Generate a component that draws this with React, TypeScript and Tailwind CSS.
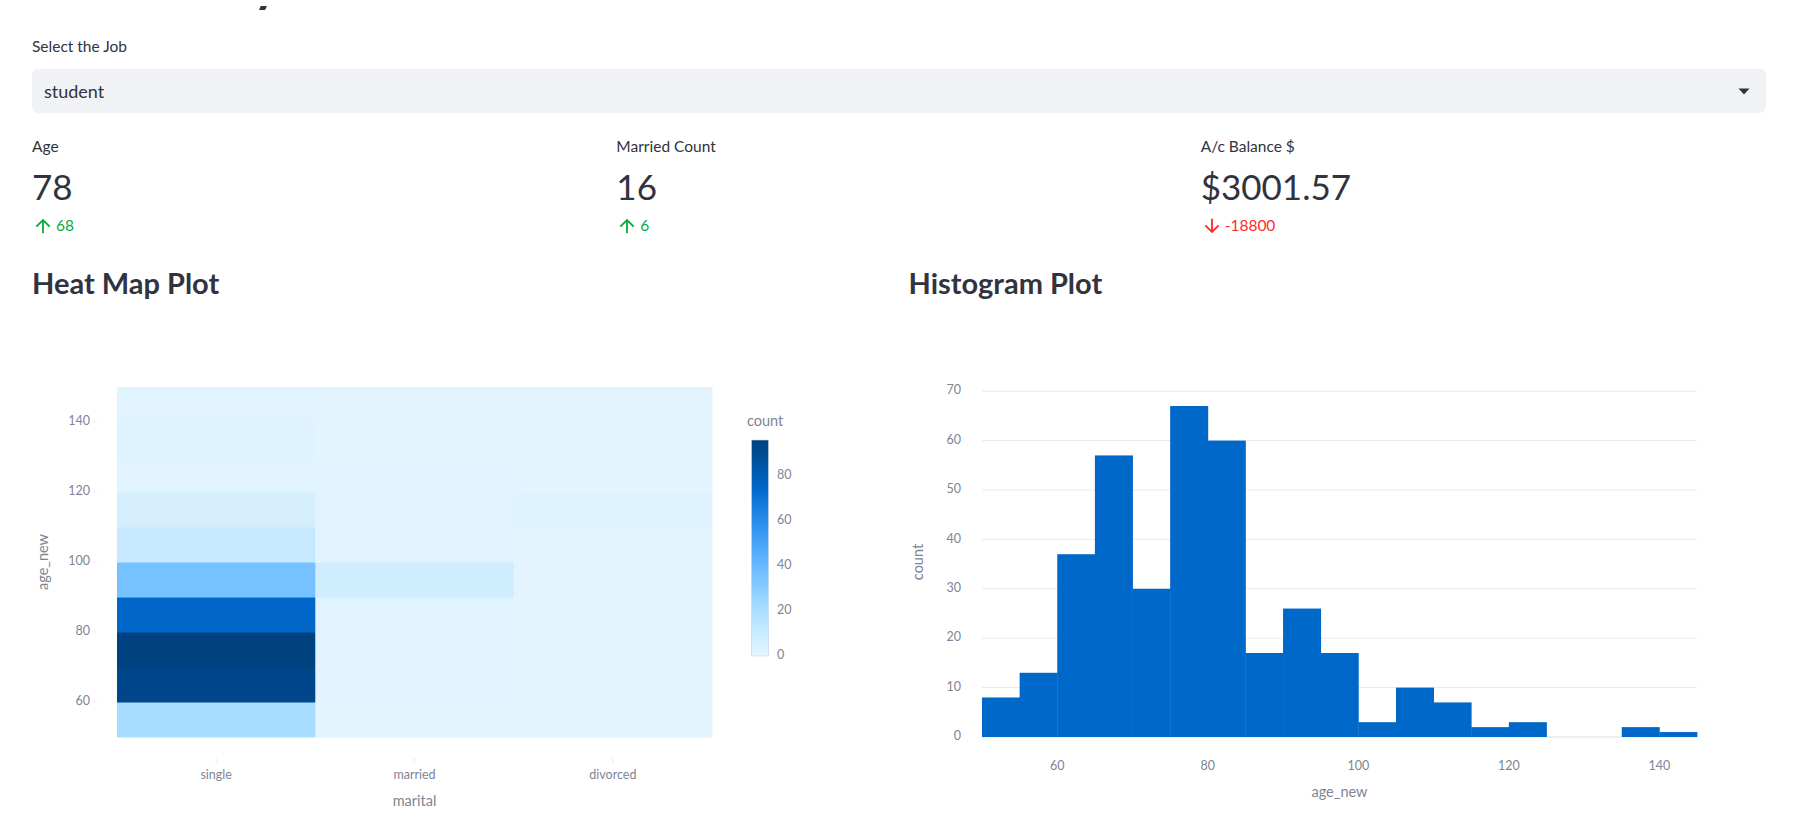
import { ReactNode } from 'react';

// streamlit sequential blues, bottom -> top
const SEQ = ['#e4f5ff', '#c7ebff', '#a6dcff', '#83c9ff', '#60b4ff', '#3d9df3', '#1c83e1', '#0068c9', '#0054a3', '#004280'];

// heat map cells per column, from the 50-60 bin up to 140-150
const HEAT = [
  ['#a6dcff', '#00468a', '#004280', '#0066c8', '#76c1ff', '#c6e9ff', '#d5eefe', '#e0f3ff', '#dff2ff', '#e1f3ff'],
  ['#e3f4ff', '#e2f4ff', '#e2f4ff', '#e0f3ff', '#d0ecff', '#e0f3ff', '#e1f3ff', '#e1f3ff', '#e3f4ff', '#e3f4ff'],
  ['#e3f4ff', '#e3f4ff', '#e3f4ff', '#e3f4ff', '#e3f4ff', '#e3f4ff', '#dff2ff', '#e3f4ff', '#e3f4ff', '#e3f4ff'],
];

const HIST = [8, 13, 37, 57, 30, 67, 60, 17, 26, 17, 3, 10, 7, 2, 3, 0, 0, 2, 1];

const AXIS = '#808495';
const GRID = '#e6eaf1';

function ArrowUp() {
  return (
    <svg width="22" height="22" viewBox="0 0 24 24" fill="#09ab3b">
      <path d="M4 12l1.41 1.41L11 7.83V20h2V7.83l5.58 5.59L20 12l-8-8-8 8z" />
    </svg>
  );
}

function ArrowDown() {
  return (
    <svg width="22" height="22" viewBox="0 0 24 24" fill="#ff2b2b">
      <path d="M20 12l-1.41-1.41L13 16.17V4h-2v12.17l-5.58-5.59L4 12l8 8 8-8z" />
    </svg>
  );
}

function Metric({ label, value, delta, up }: { label: string; value: string; delta: string; up: boolean }) {
  return (
    <div className="flex flex-col">
      <div className="h-[20px] leading-[20px] text-[15.5px] text-[#31333f]">{label}</div>
      <div className="mt-[8px] h-[44px] leading-[44px] text-[35px] text-[#31333f]">{value}</div>
      <div className={`mt-[7px] h-[22px] flex items-center gap-[2px] text-[15.5px] ${up ? 'text-[#09ab3b]' : 'text-[#ff2b2b]'}`}>
        {up ? <ArrowUp /> : <ArrowDown />}
        <span>{delta}</span>
      </div>
    </div>
  );
}

function HeatMap() {
  const left = 85;
  const top = 84;
  const bottom = 434;
  const colW = (680 - 85) / 3;
  const rowH = (bottom - top) / 10;
  const yTicks = [140, 120, 100, 80, 60];
  const cats = ['single', 'married', 'divorced'];
  const cbTop = 137;
  const cbBottom = 353;

  return (
    <svg width="857" height="534" className="block">
      <defs>
        <linearGradient id="cb" x1="0" y1="1" x2="0" y2="0">
          {SEQ.map((c, i) => (
            <stop key={i} offset={i / (SEQ.length - 1)} stopColor={c} />
          ))}
        </linearGradient>
      </defs>

      {HEAT.map((col, ci) =>
        col.map((c, ri) => (
          <rect
            key={`${ci}-${ri}`}
            x={left + ci * colW}
            y={bottom - (ri + 1) * rowH}
            width={colW + 0.5}
            height={rowH + 0.5}
            fill={c}
          />
        ))
      )}

      {yTicks.map((v) => {
        const y = bottom - (v - 50) * 3.5;
        return (
          <g key={v}>
            <line x1={61} x2={65} y1={y} y2={y} stroke={GRID} />
            <text x={58} y={y} textAnchor="end" dominantBaseline="middle" fontSize="12.5" fill={AXIS}>
              {v}
            </text>
          </g>
        );
      })}
      <text
        x={12}
        y={259}
        transform="rotate(-90 12 259)"
        textAnchor="middle"
        dominantBaseline="middle"
        fontSize="14.5"
        fill={AXIS}
      >
        age_new
      </text>

      {cats.map((c, i) => {
        const x = left + colW * (i + 0.5);
        return (
          <g key={c}>
            <line x1={x} x2={x} y1={455} y2={460} stroke={GRID} />
            <text x={x} y={472.5} textAnchor="middle" dominantBaseline="middle" fontSize="12.5" fill={AXIS}>
              {c}
            </text>
          </g>
        );
      })}
      <text x={382.5} y={499.5} textAnchor="middle" dominantBaseline="middle" fontSize="14.5" fill={AXIS}>
        marital
      </text>

      {/* colour bar */}
      <text x={715} y={119} dominantBaseline="middle" fontSize="14.5" fill={AXIS}>
        count
      </text>
      <rect x={719.5} y={cbTop} width={17} height={cbBottom - cbTop} fill="url(#cb)" stroke="#c9d3e3" strokeWidth="0.6" />
      {[0, 20, 40, 60, 80].map((v) => (
        <text key={v} x={745} y={cbBottom - v * 2.25} dominantBaseline="middle" fontSize="12.5" fill={AXIS}>
          {v}
        </text>
      ))}
    </svg>
  );
}

function Histogram() {
  const left = 73;
  const right = 788;
  const base = 434;
  const unit = 4.94;
  const binW = (right - left) / HIST.length;
  const xTicks = [60, 80, 100, 120, 140];

  return (
    <svg width="857" height="534" className="block">
      {[10, 20, 30, 40, 50, 60, 70].map((v) => (
        <line key={v} x1={left} x2={right} y1={base - v * unit} y2={base - v * unit} stroke={GRID} strokeWidth="1" />
      ))}
      <line x1={left} x2={right} y1={base} y2={base} stroke={GRID} strokeWidth="1.5" />

      {HIST.map((v, i) =>
        v > 0 ? (
          <rect key={i} x={left + i * binW} y={base - v * unit} width={binW + 0.4} height={v * unit} fill="#0068c9" />
        ) : null
      )}

      {[0, 10, 20, 30, 40, 50, 60, 70].map((v) => (
        <text key={v} x={52} y={base - v * unit} textAnchor="end" dominantBaseline="middle" fontSize="12.5" fill={AXIS}>
          {v}
        </text>
      ))}
      <text
        x={10}
        y={259}
        transform="rotate(-90 10 259)"
        textAnchor="middle"
        dominantBaseline="middle"
        fontSize="14.5"
        fill={AXIS}
      >
        count
      </text>

      {xTicks.map((v) => (
        <text
          key={v}
          x={left + ((v - 50) / 5) * binW}
          y={464}
          textAnchor="middle"
          dominantBaseline="middle"
          fontSize="12.5"
          fill={AXIS}
        >
          {v}
        </text>
      ))}
      <text x={430.5} y={490.5} textAnchor="middle" dominantBaseline="middle" fontSize="14.5" fill={AXIS}>
        age_new
      </text>
    </svg>
  );
}

function ChartBlock({ title, children }: { title: string; children: ReactNode }) {
  return (
    <div className="flex flex-col">
      <h3 className="h-[40px] leading-[40px] text-[29px] font-bold text-[#31333f]">{title}</h3>
      {children}
    </div>
  );
}

export default function App() {
  return (
    <div className="w-[1820px] h-[837px] overflow-hidden bg-white font-['Lato','Noto_Sans',sans-serif] text-[#31333f]">
      <div className="pl-[32px] pr-[54px]">
        {/* tail of the page title, just peeking out under the app header */}
        <svg width="40" height="6" className="block mt-[6px] ml-[221px]">
          <text x="0" y="-5" fontSize="52" fontWeight="700" fill="#31333f">
            y
          </text>
        </svg>

        <div className="mt-[24px] h-[20px] leading-[20px] text-[15.5px]">Select the Job</div>

        <div className="mt-[13px] h-[44px] rounded-md bg-[#f0f2f6] flex items-center justify-between pl-[12px] pr-[16px]">
          <span className="text-[18px]">student</span>
          <svg width="12" height="7" viewBox="0 0 12 7">
            <path d="M0.5 0.5h11L6 6.5z" fill="#31333f" />
          </svg>
        </div>

        <div className="mt-[23px] grid grid-cols-3 gap-[19px]">
          <Metric label="Age" value="78" delta="68" up />
          <Metric label="Married Count" value="16" delta="6" up />
          <Metric label="A/c Balance $" value="$3001.57" delta="-18800" up={false} />
        </div>

        <div className="mt-[26px] grid grid-cols-2 gap-[19px]">
          <ChartBlock title="Heat Map Plot">
            <HeatMap />
          </ChartBlock>
          <ChartBlock title="Histogram Plot">
            <Histogram />
          </ChartBlock>
        </div>
      </div>
    </div>
  );
}
